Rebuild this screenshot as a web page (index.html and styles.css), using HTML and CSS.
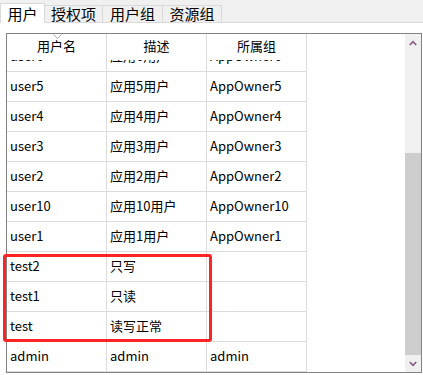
FILE: index.html
```html
<!DOCTYPE html>
<html lang="zh-CN">
<head>
<meta charset="utf-8">
<title>用户</title>
<link rel="stylesheet" href="styles.css">
</head>
<body>
<div class="tabs">
  <div class="tab selected">用户</div>
  <div class="tab w58">授权项</div>
  <div class="tab w60">用户组</div>
  <div class="tab w59">资源组</div>
</div>
<div class="page">
  <div class="frame">
    <div class="grid">
      <div class="header">
        <div class="hcell sorted">用户名<svg class="sort" width="9" height="5" viewBox="0 0 9 5"><polyline points="0.5,0.5 4.5,4.5 8.5,0.5" fill="none" stroke="#a6a6a6" stroke-width="1"/></svg></div>
        <div class="hcell">描述</div>
        <div class="hcell">所属组</div>
      </div>
      <div class="body">
        <div class="rows">
          <div class="row"><div class="cell">user6</div><div class="cell">应用6用户</div><div class="cell">AppOwner6</div></div>
          <div class="row"><div class="cell">user5</div><div class="cell">应用5用户</div><div class="cell">AppOwner5</div></div>
          <div class="row"><div class="cell">user4</div><div class="cell">应用4用户</div><div class="cell">AppOwner4</div></div>
          <div class="row"><div class="cell">user3</div><div class="cell">应用3用户</div><div class="cell">AppOwner3</div></div>
          <div class="row"><div class="cell">user2</div><div class="cell">应用2用户</div><div class="cell">AppOwner2</div></div>
          <div class="row"><div class="cell">user10</div><div class="cell">应用10用户</div><div class="cell">AppOwner10</div></div>
          <div class="row"><div class="cell">user1</div><div class="cell">应用1用户</div><div class="cell">AppOwner1</div></div>
          <div class="row"><div class="cell">test2</div><div class="cell">只写</div><div class="cell"></div></div>
          <div class="row"><div class="cell">test1</div><div class="cell">只读</div><div class="cell"></div></div>
          <div class="row"><div class="cell">test</div><div class="cell">读写正常</div><div class="cell"></div></div>
          <div class="row"><div class="cell">admin</div><div class="cell">admin</div><div class="cell">admin</div></div>
        </div>
      </div>
    </div>
    <div class="vscroll">
      <div class="sbtn"><svg width="8" height="6" viewBox="0 0 8 6"><polyline points="0.8,5 4,1.6 7.2,5" fill="none" stroke="#8a5a82" stroke-width="1.6"/></svg></div>
      <div class="track">
        <div class="gap"></div>
        <div class="thumb"></div>
      </div>
      <div class="sbtn"><svg width="8" height="6" viewBox="0 0 8 6"><polyline points="0.8,1 4,4.4 7.2,1" fill="none" stroke="#8a5a82" stroke-width="1.6"/></svg></div>
    </div>
  </div>
</div>
<div class="highlight"></div>
</body>
</html>
```

FILE: styles.css
```css
html, body {
  margin: 0;
  padding: 0;
}
body {
  width: 423px;
  height: 375px;
  background: #ffffff;
  font-family: "Noto Sans CJK SC", "Noto Sans", sans-serif;
  color: #000;
  position: relative;
  overflow: hidden;
}
.tabs {
  display: flex;
  align-items: flex-end;
  height: 23px;
  box-sizing: border-box;
  border-bottom: 1px solid #d9d9d9;
  background: #f0f0f0;
}
.tab {
  height: 17px;
  box-sizing: border-box;
  border-top: 1px solid #d9d9d9;
  border-right: 1px solid #d9d9d9;
  background: #f0f0f0;
  font-size: 15px;
  line-height: 16px;
  text-align: center;
}
.tab.selected {
  width: 45px;
  height: 20px;
  margin-bottom: -1px;
  background: #ffffff;
  border-left: 1px solid #d9d9d9;
  line-height: 19px;
  position: relative;
}
.w58 { width: 58px; }
.w60 { width: 60px; }
.w59 { width: 59px; }

.page {
  padding: 10px 1px 0 6px;
}
.frame {
  width: 416px;
  height: 340px;
  box-sizing: border-box;
  border: 1px solid #828282;
  display: flex;
}
.grid {
  width: 398px;
  display: flex;
  flex-direction: column;
  background: #fff;
}
.header {
  display: flex;
  height: 26px;
  flex: none;
}
.hcell {
  width: 100px;
  box-sizing: border-box;
  border-right: 1px solid #dcdcdc;
  font-size: 13px;
  line-height: 24px;
  text-align: center;
  position: relative;
}
.sort {
  position: absolute;
  left: 46px;
  top: 0;
  display: block;
}
.body {
  flex: 1;
  overflow: hidden;
}
.rows {
  margin-top: -18px;
}
.row {
  display: flex;
  height: 30px;
}
.cell {
  width: 100px;
  box-sizing: border-box;
  border-right: 1px solid #dcdcdc;
  border-bottom: 1px solid #dcdcdc;
  padding-left: 3px;
  font-size: 13px;
  line-height: 28px;
  white-space: nowrap;
  overflow: hidden;
}
.vscroll {
  width: 16px;
  display: flex;
  flex-direction: column;
  background: #f0f0f0;
}
.sbtn {
  height: 17px;
  flex: none;
  display: flex;
  align-items: center;
  justify-content: center;
}
.track {
  flex: 1;
  display: flex;
  flex-direction: column;
}
.gap {
  height: 102px;
}
.thumb {
  flex: 1;
  background: #cdcdcd;
}
.highlight {
  position: absolute;
  left: 3px;
  top: 254px;
  width: 209px;
  height: 88px;
  box-sizing: border-box;
  border: 3px solid #ff2424;
  border-radius: 3px;
}
```
